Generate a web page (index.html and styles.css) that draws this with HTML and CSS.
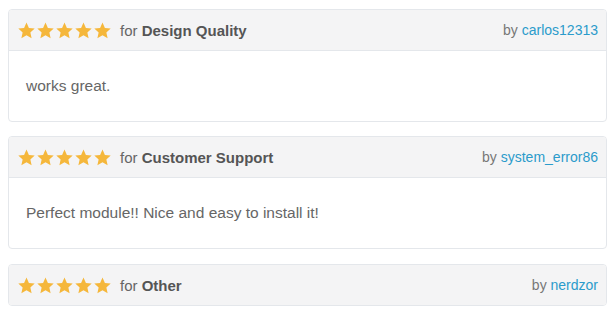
FILE: index.html
```html
<!DOCTYPE html>
<html>
<head>
<meta charset="utf-8">
<link rel="stylesheet" href="styles.css">
</head>
<body>
<svg width="0" height="0" class="defs">
  <defs>
    <symbol id="star" viewBox="-1 -1 26 26">
      <path d="M12 1.2l3.3 7.3 7.9.8-5.9 5.4 1.7 7.8L12 18.5l-7 4 1.7-7.8L.8 9.3l7.9-.8z"/>
    </symbol>
  </defs>
</svg>
<div class="reviews">
  <div class="card">
    <div class="head">
      <div class="left">
        <span class="stars"><svg><use href="#star"/></svg><svg><use href="#star"/></svg><svg><use href="#star"/></svg><svg><use href="#star"/></svg><svg><use href="#star"/></svg></span>
        <span class="for">for <b>Design Quality</b></span>
      </div>
      <div class="by">by <a href="#">carlos12313</a></div>
    </div>
    <div class="body">works great.</div>
  </div>
  <div class="card">
    <div class="head">
      <div class="left">
        <span class="stars"><svg><use href="#star"/></svg><svg><use href="#star"/></svg><svg><use href="#star"/></svg><svg><use href="#star"/></svg><svg><use href="#star"/></svg></span>
        <span class="for">for <b>Customer Support</b></span>
      </div>
      <div class="by">by <a href="#">system_error86</a></div>
    </div>
    <div class="body">Perfect module!! Nice and easy to install it!</div>
  </div>
  <div class="card last">
    <div class="head">
      <div class="left">
        <span class="stars"><svg><use href="#star"/></svg><svg><use href="#star"/></svg><svg><use href="#star"/></svg><svg><use href="#star"/></svg><svg><use href="#star"/></svg></span>
        <span class="for">for <b>Other</b></span>
      </div>
      <div class="by">by <a href="#">nerdzor</a></div>
    </div>
  </div>
</div>
</body>
</html>
```
FILE: styles.css
```css
html, body {
  margin: 0;
  padding: 0;
  background: #fff;
}
body {
  font-family: "Liberation Sans", Arial, sans-serif;
  color: #666;
}
.defs {
  position: absolute;
  width: 0;
  height: 0;
}
.reviews {
  padding: 9px 9px 0 8px;
  display: flex;
  flex-direction: column;
  gap: 14px;
}
.card {
  border: 1px solid #e4e7eb;
  border-radius: 4px;
  overflow: hidden;
}
.card.last {
  margin-top: 1px;
}
.head {
  background: #f4f4f5;
  border-bottom: 1px solid #e4e7eb;
  height: 40px;
  padding: 0 8px 0 8px;
  display: flex;
  align-items: center;
  justify-content: space-between;
}
.head:last-child {
  border-bottom: none;
}
.left {
  display: flex;
  align-items: center;
}
.stars {
  display: flex;
  margin-right: 8px;
}
.stars svg {
  width: 19px;
  height: 19px;
  fill: #f5b73b;
  display: block;
}
.for {
  font-size: 15px;
  color: #666;
}
.for b {
  color: #555;
  font-weight: bold;
}
.by {
  font-size: 14px;
  color: #777;
}
.by a {
  color: #2b9bcb;
  text-decoration: none;
}
.body {
  height: 70px;
  padding: 0 17px;
  display: flex;
  align-items: center;
  font-size: 15.5px;
  color: #666;
}
```
